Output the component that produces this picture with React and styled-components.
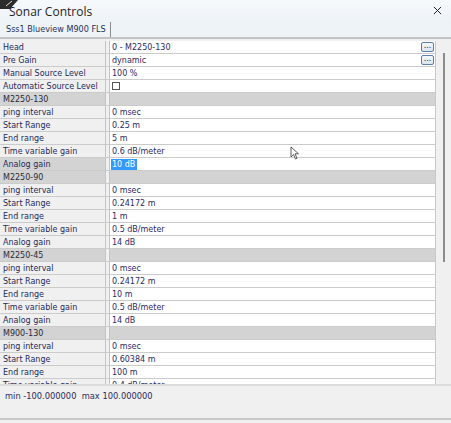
import { styled, createGlobalStyle } from "styled-components";

const GlobalStyle = createGlobalStyle`
  html, body { margin: 0; padding: 0; background: #f0f0f0; }
  body { width: 451px; height: 423px; overflow: hidden; }
`;

const rows = [
  { label: "Head", value: "0 - M2250-130", button: true },
  { label: "Pre Gain", value: "dynamic", button: true },
  { label: "Manual Source Level", value: "100 %" },
  { label: "Automatic Source Level", check: true },
  { header: "M2250-130" },
  { label: "ping interval", value: "0 msec" },
  { label: "Start Range", value: "0.25 m" },
  { label: "End range", value: "5 m" },
  { label: "Time variable gain", value: "0.6 dB/meter" },
  { label: "Analog gain", value: "10 dB", selected: true },
  { header: "M2250-90" },
  { label: "ping interval", value: "0 msec" },
  { label: "Start Range", value: "0.24172 m" },
  { label: "End range", value: "1 m" },
  { label: "Time variable gain", value: "0.5 dB/meter" },
  { label: "Analog gain", value: "14 dB" },
  { header: "M2250-45" },
  { label: "ping interval", value: "0 msec" },
  { label: "Start Range", value: "0.24172 m" },
  { label: "End range", value: "10 m" },
  { label: "Time variable gain", value: "0.5 dB/meter" },
  { label: "Analog gain", value: "14 dB" },
  { header: "M900-130" },
  { label: "ping interval", value: "0 msec" },
  { label: "Start Range", value: "0.60384 m" },
  { label: "End range", value: "100 m" },
  { label: "Time variable gain", value: "0.4 dB/meter" },
];

export default function App() {
  return (
    <>
      <GlobalStyle />
      <Window>
        <TitleBar>
          <Corner viewBox="0 0 18 9">
            <path d="M0 0 H18 L10 9 H0 Z" fill="#2b2b2b" />
            <path d="M6 6 L12 1" stroke="#ddd" strokeWidth="1" />
          </Corner>
          <Title>Sonar Controls</Title>
          <Close viewBox="0 0 10 10">
            <path d="M1 1 L9 9 M9 1 L1 9" stroke="#222" strokeWidth="1.1" />
          </Close>
        </TitleBar>
        <TabBar>
          <Tab>Sss1 Blueview M900 FLS</Tab>
        </TabBar>
        <Body>
          <Grid>
            {rows.map((r, i) =>
              r.header ? (
                <Row key={i}>
                  <LabelCell $header>{r.header}</LabelCell>
                  <ValueCell $header />
                </Row>
              ) : (
                <Row key={i}>
                  <LabelCell $selected={r.selected}>{r.label}</LabelCell>
                  <ValueCell>
                    {r.check ? (
                      <Check />
                    ) : r.selected ? (
                      <Selected>{r.value}</Selected>
                    ) : (
                      r.value
                    )}
                    {r.button && <DotButton>...</DotButton>}
                  </ValueCell>
                </Row>
              )
            )}
            <Cursor viewBox="0 0 10 14">
              <path d="M1 1 L1 11 L3.5 8.5 L5.5 13 L7 12.3 L5 7.8 L8.5 7.8 Z" fill="#fff" stroke="#333" strokeWidth="0.8" />
            </Cursor>
          </Grid>
          <ScrollTrack>
            <Thumb />
          </ScrollTrack>
        </Body>
        <Info>min -100.000000&nbsp;&nbsp;max 100.000000</Info>
      </Window>
    </>
  );
}

const Window = styled.div`
  width: 451px;
  height: 423px;
  display: flex;
  flex-direction: column;
  background: #f0f0f0;
  font-family: "DejaVu Sans", Verdana, sans-serif;
`;

const TitleBar = styled.div`
  position: relative;
  flex: 0 0 21px;
  display: flex;
  align-items: center;
  padding: 0 8px 0 9px;
  background: linear-gradient(#f6f9fc, #eef3f8);
`;

const Corner = styled.svg`
  position: absolute;
  left: 0;
  top: 0;
  width: 18px;
  height: 9px;
`;

const Title = styled.div`
  flex: 1;
  font-family: "Open Sans", "Noto Sans", sans-serif;
  font-size: 12px;
  color: #1e1e1e;
  padding-top: 1px;
`;

const Close = styled.svg`
  width: 9px;
  height: 9px;
  margin-right: 1px;
`;

const TabBar = styled.div`
  flex: 0 0 16px;
  display: flex;
  align-items: stretch;
  background: #eef3f8;
  border-bottom: 2px solid #c4c4c4;
`;

const Tab = styled.div`
  display: flex;
  align-items: center;
  padding: 0 4px 2px 6px;
  font-size: 8.1px;
  color: #27305a;
  border-right: 1px solid #8a8a8a;
  margin-top: 1px;
`;

const Body = styled.div`
  flex: 0 0 345px;
  display: flex;
  padding-top: 2px;
  box-sizing: border-box;
  overflow: hidden;
`;

const Grid = styled.div`
  position: relative;
  width: 435px;
  overflow: hidden;
  background: #fff;
  border-right: 1px solid #c8c8c8;
`;

const Row = styled.div`
  display: grid;
  grid-template-columns: 106px 1fr;
  height: 13px;
  box-sizing: border-box;
  border-bottom: 1px solid #cbcbcb;
  background: #f0f0f0;
`;

const LabelCell = styled.div`
  display: flex;
  align-items: center;
  padding-left: 3px;
  font-size: 8px;
  color: ${(p) => (p.$header ? "#2a2a3a" : "#242a5c")};
  background: ${(p) => (p.$header || p.$selected ? "#d3d3d3" : "#f0f0f0")};
  border-right: 1px solid #c4c4c4;
  white-space: nowrap;
  overflow: hidden;
`;

const ValueCell = styled.div`
  position: relative;
  display: flex;
  align-items: center;
  margin-left: 3px;
  padding-left: 2px;
  font-size: 8px;
  color: #2c2a66;
  background: ${(p) => (p.$header ? "#d3d3d3" : "#fff")};
  border-left: 1px solid #c4c4c4;
  white-space: nowrap;
`;

const Selected = styled.span`
  background: #3399ff;
  color: #fff;
  padding: 0 2px 0 1px;
  margin-left: -1px;
  line-height: 11px;
`;

const Check = styled.span`
  width: 8px;
  height: 8px;
  box-sizing: border-box;
  border: 1px solid #555;
  background: #fff;
`;

const DotButton = styled.span`
  position: absolute;
  right: 1px;
  top: 1px;
  width: 13px;
  height: 10px;
  box-sizing: border-box;
  border: 1px solid #5b7fa8;
  border-radius: 2px;
  background: linear-gradient(#f4f8fc, #d9e4f0);
  font-size: 8px;
  line-height: 5px;
  text-align: center;
  color: #222;
`;

const Cursor = styled.svg`
  position: absolute;
  left: 290px;
  top: 105px;
  width: 10px;
  height: 14px;
`;

const ScrollTrack = styled.div`
  flex: 1;
  position: relative;
  background: #f0f0f0;
`;

const Thumb = styled.div`
  position: absolute;
  left: 7px;
  top: 12px;
  width: 2px;
  height: 209px;
  background: #8c8c8c;
`;

const Info = styled.div`
  flex: 0 0 36px;
  box-sizing: border-box;
  border-top: 2px solid #dcdcdc;
  border-bottom: 2px solid #c8c8c8;
  padding: 5px 5px 0;
  font-size: 8.3px;
  color: #2a2a5a;
  background: #f0f0f0;
`;
